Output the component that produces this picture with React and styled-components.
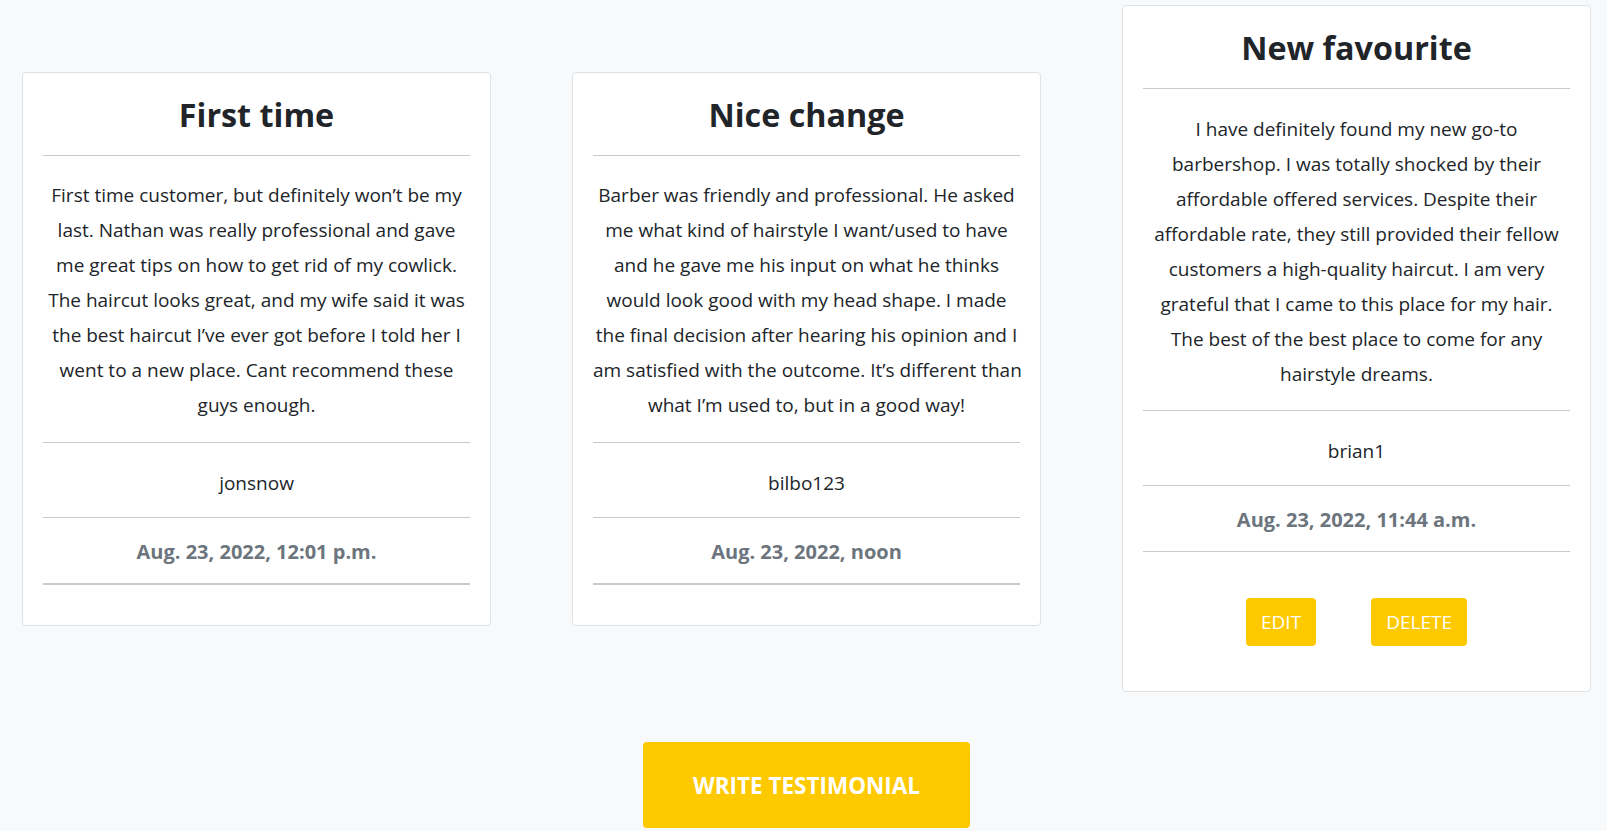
import React from "react";
import styled, { createGlobalStyle } from "styled-components";

const GlobalStyle = createGlobalStyle`
  html, body { margin: 0; padding: 0; }
  body {
    background: #f8f9fa;
    font-family: "Open Sans", "Noto Sans", sans-serif;
    color: #212529;
  }
`;

const Page = styled.main`
  padding: 5px 16px 4px 22px;
  display: flex;
  flex-direction: column;
  align-items: center;
`;

const CardRow = styled.section`
  display: flex;
  align-items: center;
  gap: 81px;
  width: 100%;
`;

const Card = styled.article`
  width: 469px;
  box-sizing: border-box;
  background: #fff;
  border: 1px solid #dfe2e5;
  border-radius: 4px;
  padding: 20px 20px;
  display: flex;
  flex-direction: column;
`;

const Title = styled.h2`
  margin: 0 0 20px;
  font-size: 32.3px;
  line-height: 42px;
  font-weight: 700;
  text-align: center;
  color: #212529;
`;

const Divider = styled.hr`
  margin: 0;
  border: 0;
  border-top: ${(p) => (p.$thick ? 2 : 1)}px solid #c8c9ca;
`;

const Body = styled.p`
  margin: 0;
  padding: 22.5px 0 18.5px;
  font-size: 19px;
  line-height: 35px;
  text-align: center;
  white-space: nowrap;
`;

const Author = styled.div`
  padding: 25px 0 19px;
  font-size: 19px;
  line-height: 30px;
  text-align: center;
`;

const Stamp = styled.div`
  padding: 19px 0 16px;
  font-size: 20px;
  line-height: 30px;
  font-weight: 700;
  text-align: center;
  color: #6c757d;
`;

const Actions = styled.div`
  display: flex;
  justify-content: center;
  gap: 55px;
  padding: ${(p) => (p.$empty ? "20px 0 0" : "46px 0 25px")};
`;

const SmallButton = styled.button`
  height: 48px;
  padding: 0 15px;
  border: 0;
  border-radius: 4px;
  background: #ffc900;
  color: #fff;
  font-family: "Open Sans", "Noto Sans", sans-serif;
  font-size: 19px;
  text-transform: uppercase;
  cursor: pointer;
`;

const WriteButton = styled.button`
  margin-top: 50px;
  width: 327px;
  height: 86px;
  border: 0;
  border-radius: 4px;
  background: #ffc900;
  color: #fff;
  font-family: "Open Sans", "Noto Sans", sans-serif;
  font-size: 22.5px;
  font-weight: 700;
  text-transform: uppercase;
  cursor: pointer;
`;

const testimonials = [
  {
    title: "First time",
    lines: [
      "First time customer, but definitely won’t be my",
      "last. Nathan was really professional and gave",
      "me great tips on how to get rid of my cowlick.",
      "The haircut looks great, and my wife said it was",
      "the best haircut I’ve ever got before I told her I",
      "went to a new place. Cant recommend these",
      "guys enough.",
    ],
    author: "jonsnow",
    date: "Aug. 23, 2022, 12:01 p.m.",
    own: false,
  },
  {
    title: "Nice change",
    lines: [
      "Barber was friendly and professional. He asked",
      "me what kind of hairstyle I want/used to have",
      "and he gave me his input on what he thinks",
      "would look good with my head shape. I made",
      "the final decision after hearing his opinion and I",
      "am satisfied with the outcome. It’s different than",
      "what I’m used to, but in a good way!",
    ],
    author: "bilbo123",
    date: "Aug. 23, 2022, noon",
    own: false,
  },
  {
    title: "New favourite",
    lines: [
      "I have definitely found my new go-to",
      "barbershop. I was totally shocked by their",
      "affordable offered services. Despite their",
      "affordable rate, they still provided their fellow",
      "customers a high-quality haircut. I am very",
      "grateful that I came to this place for my hair.",
      "The best of the best place to come for any",
      "hairstyle dreams.",
    ],
    author: "brian1",
    date: "Aug. 23, 2022, 11:44 a.m.",
    own: true,
  },
];

export default function App() {
  return (
    <>
      <GlobalStyle />
      <Page>
        <CardRow>
          {testimonials.map((t) => (
            <Card key={t.title}>
              <Title>{t.title}</Title>
              <Divider />
              <Body>
                {t.lines.map((l, i) => (
                  <React.Fragment key={i}>
                    {l}
                    {i < t.lines.length - 1 && <br />}
                  </React.Fragment>
                ))}
              </Body>
              <Divider />
              <Author>{t.author}</Author>
              <Divider />
              <Stamp>{t.date}</Stamp>
              <Divider $thick={!t.own} />
              {t.own ? (
                <Actions>
                  <SmallButton>Edit</SmallButton>
                  <SmallButton>Delete</SmallButton>
                </Actions>
              ) : (
                <Actions $empty />
              )}
            </Card>
          ))}
        </CardRow>
        <WriteButton>Write testimonial</WriteButton>
      </Page>
    </>
  );
}
